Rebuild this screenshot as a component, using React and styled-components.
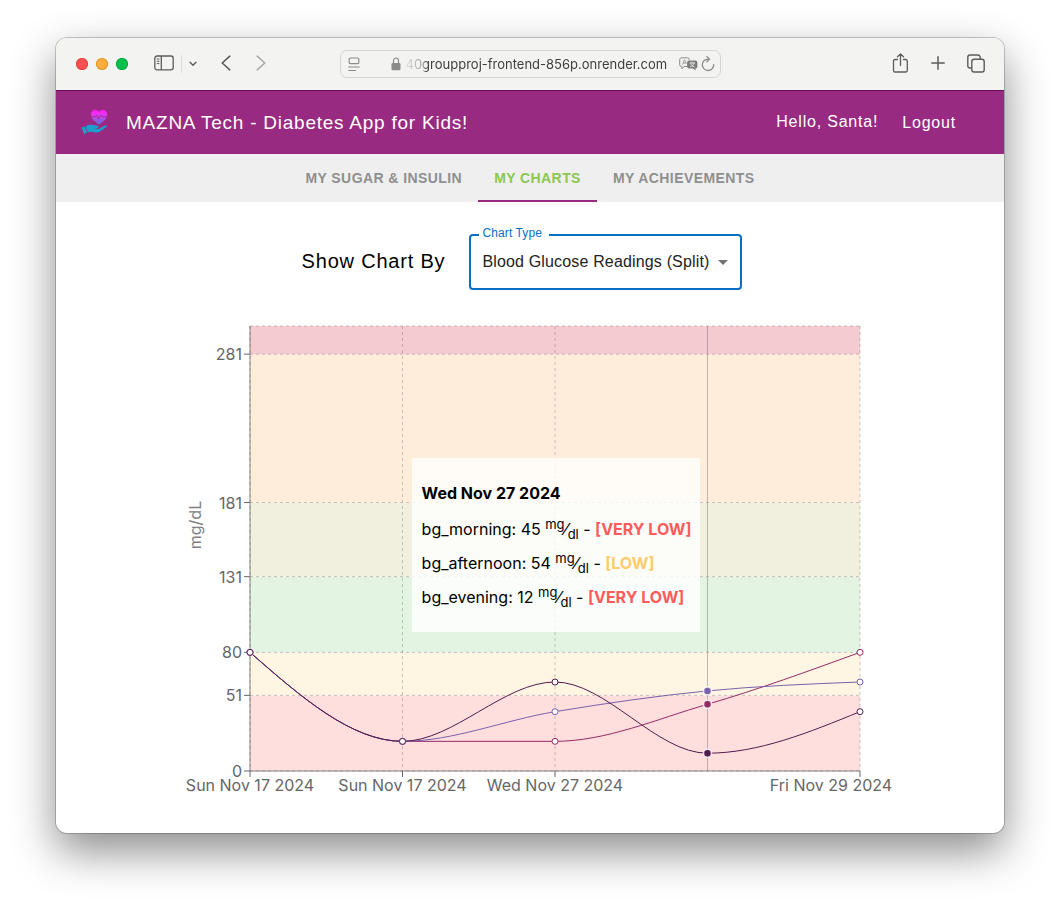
import React from "react";
import styled, { createGlobalStyle } from "styled-components";

const HELV = `"Liberation Sans", Helvetica, Arial, sans-serif`;
const SYSTEM = `Inter, "Noto Sans", sans-serif`;

const GlobalStyle = createGlobalStyle`
  *, *::before, *::after { box-sizing: border-box; }
  body { margin: 0; background: #fff; font-family: ${HELV}; }
  button, input, select { font: inherit; color: inherit; border: 0; background: none; padding: 0; margin: 0; }
  button { cursor: pointer; }
  svg { display: block; }
`;

const Desktop = styled.div`
  padding: 38px 56px 74px;
`;

const BrowserWindow = styled.div`
  border-radius: 11px;
  overflow: hidden;
  background: #fff;
  box-shadow: 0 0 0 1px rgba(0, 0, 0, 0.2), 0 18px 44px rgba(0, 0, 0, 0.46);
`;

const Toolbar = styled.div`
  display: grid;
  grid-template-columns: 1fr minmax(0, 381px) 1fr;
  align-items: center;
  height: 52px;
  background: #f3f3f1;
  color: #5c5c5b;
`;

const ToolGroup = styled.div`
  display: flex;
  align-items: center;
  justify-content: ${(p) => (p.$end ? "flex-end" : "flex-start")};
  gap: ${(p) => p.$gap}px;
  padding: 0 ${(p) => (p.$end ? 18 : 0)}px 0 ${(p) => (p.$end ? 0 : 20)}px;
`;

const Lights = styled.div`
  display: flex;
  gap: 8px;
  margin-right: 26px;
`;

const Light = styled.button`
  width: 12px;
  height: 12px;
  border-radius: 50%;
  background: ${(p) => p.$color};
  box-shadow: inset 0 0 0 1px ${(p) => p.$ring};
`;

const IconButton = styled.button`
  display: flex;
  align-items: center;
  justify-content: center;
  width: ${(p) => p.$w || 20}px;
  height: 24px;
  padding-bottom: ${(p) => (p.$w ? 0 : 2)}px;
  color: ${(p) => (p.$muted ? "#aaaaa9" : "inherit")};
`;

const Divider = styled.span`
  width: 1px;
  height: 18px;
  margin: 0 4px 0 7px;
  background: #dededc;
`;

const NavButtons = styled.div`
  display: flex;
  gap: 15px;
  margin-left: 16px;
`;

const AddressBar = styled.div`
  display: flex;
  align-items: center;
  height: 28px;
  padding: 0 3px 0 7px;
  border: 1px solid #d5d5d3;
  border-radius: 7px;
  color: #8b8b8a;
`;

const LockSlot = styled.span`
  margin: 0 5px 0 30px;
`;

const Address = styled.input`
  flex: 1;
  min-width: 0;
  height: 24px;
  font-family: ${SYSTEM};
  font-size: 13px;
  color: #3f3f3e;
  outline: none;
  mask-image: linear-gradient(to right, rgba(0, 0, 0, 0.1), rgba(0, 0, 0, 0.5) 18px, #000 20px);
`;

const AppHeader = styled.header`
  display: flex;
  align-items: center;
  height: 64px;
  padding: 0 48px 0 24px;
  border-top: 1px solid #6b0a5c;
  background: #992a82;
  color: #fff;
`;

const Brand = styled.h1`
  flex: 1;
  margin: 0 0 0 18px;
  font-size: 19px;
  font-weight: 400;
  line-height: 24px;
  letter-spacing: 0.04em;
`;

const Greeting = styled.span`
  margin-right: 24px;
  padding-bottom: 2px;
  font-size: 16px;
  line-height: 24px;
  letter-spacing: 0.05em;
`;

const LogoutLink = styled.a`
  font-size: 16px;
  line-height: 24px;
  letter-spacing: 0.05em;
  color: inherit;
  text-decoration: none;
`;

const TabBar = styled.nav`
  display: flex;
  justify-content: center;
  height: 48px;
  background: #efefef;
`;

const Tab = styled.button`
  height: 48px;
  padding: 2px 16px 0;
  border-bottom: 2px solid ${(p) => (p.$active ? "#992a82" : "transparent")};
  font-size: 14px;
  font-weight: 700;
  letter-spacing: 0.03em;
  text-transform: uppercase;
  color: ${(p) => (p.$active ? "#8cc751" : "#8f8f8f")};
`;

const Main = styled.main`
  padding: 32px 24px 27px;
`;

const Controls = styled.div`
  display: flex;
  align-items: center;
  justify-content: center;
  gap: 24px;
  padding-right: 16px;
`;

const ControlsTitle = styled.h2`
  margin: 0;
  padding-bottom: 2px;
  font-size: 20px;
  font-weight: 400;
  line-height: 24px;
  letter-spacing: 0.04em;
  color: #000;
`;

const SelectField = styled.div`
  position: relative;
  display: flex;
  align-items: center;
  width: 273px;
  height: 56px;
  border: 2px solid #0a6fc4;
  border-radius: 4px;
`;

const SelectLabel = styled.label`
  position: absolute;
  top: -13px;
  left: 8px;
  padding: 0 7px 0 3px;
  background: #fff;
  font-size: 12px;
  line-height: 20px;
  letter-spacing: 0.01em;
  color: #0a6fc4;
`;

const Select = styled.select`
  flex: 1;
  height: 52px;
  padding: 0 28px 2px 11px;
  appearance: none;
  outline: none;
  font-size: 16px;
  letter-spacing: 0.01em;
  color: #222;
`;

const SelectArrow = styled.svg`
  position: absolute;
  top: 50%;
  right: 12px;
  margin-top: -2px;
  pointer-events: none;
`;

const ChartFrame = styled.div`
  position: relative;
  max-width: 740px;
  margin: 16px auto 0;
`;

const ChartSvg = styled.svg`
  width: 100%;
  height: auto;
  font-family: ${SYSTEM};
  font-size: 16px;
  fill: #666;
`;

const Tooltip = styled.div`
  position: absolute;
  top: 152px;
  left: 34%;
  padding: 18px 8px 18px 10px;
  background: rgba(255, 255, 255, 0.8);
  font-family: ${SYSTEM};
  font-size: 16px;
  line-height: 34px;
  white-space: nowrap;
  color: #000;

  p { margin: 0; height: 34px; }
  p:first-child { height: 36px; }
  sup, sub { font-size: 13px; line-height: 0; }
`;

const Level = styled.strong`
  color: ${(p) => p.$color};
`;

const X0 = 90;
const X1 = 700;
const Y0 = 20;
const Y1 = 465;
const MAX = 300;
const STEP = (X1 - X0) / 4;
const yOf = (v) => Y1 - (v * (Y1 - Y0)) / MAX;
const xOf = (i) => X0 + i * STEP;

const BANDS = [
  { from: 0, to: 51, color: "#ffdfde" },
  { from: 51, to: 80, color: "#fef5e2" },
  { from: 80, to: 131, color: "#e3f4e3" },
  { from: 131, to: 181, color: "#f1f0df" },
  { from: 181, to: 281, color: "#ffeddc" },
  { from: 281, to: 300, color: "#f3cbd1" },
];

const SERIES = [
  { key: "bg_morning", values: [80, 20, 20, 45, 80], color: "#942b65" },
  { key: "bg_afternoon", values: [80, 20, 40, 54, 60], color: "#7a62ad" },
  { key: "bg_evening", values: [80, 20, 60, 12, 40], color: "#521b4c" },
];

const DAYS = [
  { i: 0, text: "Sun Nov 17 2024" },
  { i: 1, text: "Sun Nov 17 2024" },
  { i: 2, text: "Wed Nov 27 2024" },
  { i: 4, text: "Fri Nov 29 2024", shift: -29 },
];

const ACTIVE = 3;

// Monotone cubic interpolation through evenly spaced points.
function monotonePath(values) {
  const ys = values.map(yOf);
  const n = ys.length;
  const d = ys.slice(1).map((y, i) => (y - ys[i]) / STEP);
  const m = ys.map((_, i) => {
    if (i === 0 || i === n - 1) return 0;
    const a = d[i - 1];
    const b = d[i];
    return (
      (Math.sign(a) + Math.sign(b)) *
      Math.min(Math.abs(a), Math.abs(b), 0.5 * Math.abs((a + b) / 2))
    );
  });
  m[0] = (3 * d[0] - m[1]) / 2;
  m[n - 1] = (3 * d[n - 2] - m[n - 2]) / 2;
  const h = STEP / 3;
  let path = `M${xOf(0)},${ys[0]}`;
  for (let i = 1; i < n; i += 1) {
    path += `C${xOf(i - 1) + h},${ys[i - 1] + m[i - 1] * h},${xOf(i) - h},${ys[i] - m[i] * h},${xOf(i)},${ys[i]}`;
  }
  return path;
}

function GlucoseChart() {
  return (
    <ChartSvg viewBox="0 0 740 500" role="img" aria-label="Blood glucose readings">
      {BANDS.map((b) => (
        <rect key={b.from} x={X0} width={X1 - X0} y={yOf(b.to)} height={yOf(b.from) - yOf(b.to)} fill={b.color} />
      ))}
      <g stroke="#666" fill="none">
        <path d={`M${X0},${Y0}V${Y1}H${X1}`} strokeOpacity="0.8" />
        {[0, 51, 80, 131, 181, 281].map((v) => (
          <path key={v} d={`M${X0 - 6},${yOf(v)}H${X0}`} />
        ))}
        {DAYS.map((d) => (
          <path key={d.i} d={`M${xOf(d.i)},${Y1}v6`} />
        ))}
      </g>
      <g stroke="#6e5a5a" strokeOpacity="0.34" strokeDasharray="3 3" fill="none">
        {[0, 51, 80, 131, 181, 281, 300].map((v) => (
          <path key={v} d={`M${X0},${yOf(v)}H${X1}`} />
        ))}
        {DAYS.map((d) => (
          <path key={d.i} d={`M${xOf(d.i)},${Y0}V${Y1}`} />
        ))}
      </g>
      {[0, 51, 80, 131, 181, 281].map((v) => (
        <text key={v} x={X0 - 8} y={yOf(v) + 6} textAnchor="end">{v}</text>
      ))}
      {DAYS.map((d) => (
        <text key={d.i} x={xOf(d.i) + (d.shift || 0)} y={Y1 + 20} textAnchor="middle">{d.text}</text>
      ))}
      <text transform="translate(41 219) rotate(-90)" textAnchor="middle" fill="#808080">mg/dL</text>
      <path d={`M${xOf(ACTIVE)},${Y0}V${Y1}`} stroke="#776b6b" strokeOpacity="0.45" />
      {SERIES.map((s) => (
        <path key={s.key} d={monotonePath(s.values)} fill="none" stroke={s.color} />
      ))}
      {SERIES.map((s) =>
        s.values.map((v, i) =>
          i === ACTIVE ? (
            <circle key={s.key + i} cx={xOf(i)} cy={yOf(v)} r="4" fill={s.color} stroke="#fff" strokeOpacity="0.8" strokeWidth="1.6" />
          ) : (
            <circle key={s.key + i} cx={xOf(i)} cy={yOf(v)} r="3" fill="#fff" stroke={s.color} />
          )
        )
      )}
    </ChartSvg>
  );
}

function Reading({ name, value, level, color }) {
  return (
    <p>
      {name}: {value} <sup>mg</sup>⁄<sub>dl</sub> - <Level $color={color}>[{level}]</Level>
    </p>
  );
}

function Logo() {
  return (
    <svg width="28" height="28" viewBox="0 0 28 28" aria-hidden="true">
      <defs>
        <linearGradient id="logoFill" x1="0" y1="0" x2="0" y2="28" gradientUnits="userSpaceOnUse">
          <stop offset="0.05" stopColor="#ff1cf5" />
          <stop offset="0.2" stopColor="#e535ee" />
          <stop offset="0.5" stopColor="#6a6cdc" />
          <stop offset="0.62" stopColor="#1b9fce" />
          <stop offset="1" stopColor="#0fa8c8" />
        </linearGradient>
      </defs>
      <g fill="url(#logoFill)">
        <path d="M19 15.400C13 11.500 11 9 11 5.600C11 2.800 12.900 0.800 15.200 0.800C16.900 0.800 18.200 1.700 19 3.100C19.800 1.700 21.200 0.800 22.900 0.800C25.200 0.800 27.200 2.800 27.200 5.600C27.200 9 25 11.500 19 15.400Z" />
        <path d="M1.600 18.600L4.600 17.400L7 23.600L4 25.200Z" />
        <path d="M5.600 17.600C8 15.300 11 14.900 13.500 15.900C15.200 16.600 17 16.200 18.200 16.900C19.200 17.600 18.400 18.900 17.200 19L13.500 19.300L18.500 19.900L25.200 16.400C26.600 15.800 27.500 17.100 26.300 18L19.500 22.800C18 23.700 16 23.600 14 23.200C11.500 22.700 10 22.600 7.800 23.200Z" />
      </g>
      <path d="M11 7.700H15.400L16.800 6.200L18.500 10.200L20.600 6.300L21.800 7.700H27.200" fill="none" stroke="#992a82" strokeWidth="0.8" />
    </svg>
  );
}

export default function App() {
  return (
    <>
      <GlobalStyle />
      <Desktop>
        <BrowserWindow>
          <Toolbar>
            <ToolGroup $gap={0}>
              <Lights>
                <Light aria-label="Close" $color="#ff5150" $ring="#e2403f" />
                <Light aria-label="Minimise" $color="#ffae3d" $ring="#e0962c" />
                <Light aria-label="Zoom" $color="#03c14b" $ring="#05a83f" />
              </Lights>
              <IconButton aria-label="Sidebar">
                <svg width="20" height="16" viewBox="0 0 20 16" fill="none" stroke="currentColor" strokeWidth="1.3">
                  <rect x="0.8" y="1" width="18.400" height="13.800" rx="2.200" />
                  <path d="M7.300 1V14.800" />
                  <path d="M2.800 4H5.400M2.800 6.300H5.400M2.800 8.600H5.400" strokeWidth="1" />
                </svg>
              </IconButton>
              <Divider />
              <IconButton $w={14} aria-label="Tab groups">
                <svg width="8" height="6" viewBox="0 0 8 6" fill="none" stroke="currentColor" strokeWidth="1.4" strokeLinecap="round" strokeLinejoin="round">
                  <path d="M1 1.300L4 4.300L7 1.300" />
                </svg>
              </IconButton>
              <NavButtons>
                <IconButton aria-label="Back">
                  <svg width="10" height="16" viewBox="0 0 10 16" fill="none" stroke="currentColor" strokeWidth="1.6" strokeLinecap="round" strokeLinejoin="round">
                    <path d="M8.800 1.200L1.200 8L8.800 14.800" />
                  </svg>
                </IconButton>
                <IconButton $muted aria-label="Forward">
                  <svg width="10" height="16" viewBox="0 0 10 16" fill="none" stroke="currentColor" strokeWidth="1.6" strokeLinecap="round" strokeLinejoin="round">
                    <path d="M1.200 1.200L8.800 8L1.200 14.800" />
                  </svg>
                </IconButton>
              </NavButtons>
            </ToolGroup>
            <AddressBar>
              <IconButton $w={13} aria-label="Reader">
                <svg width="12" height="15" viewBox="0 0 12 15" fill="none" stroke="currentColor" strokeWidth="1.2" strokeLinecap="round">
                  <rect x="1.200" y="1" width="9.600" height="5.600" rx="1.200" />
                  <path d="M0.700 10H11.300M0.700 13.500H7.500" />
                </svg>
              </IconButton>
              <LockSlot>
                <svg width="10" height="14" viewBox="0 0 10 14">
                  <rect x="0.500" y="6" width="9" height="7.200" rx="1.300" fill="currentColor" />
                  <path d="M2.500 6.500V3.700A2.500 2.700 0 0 1 7.500 3.700V6.500" fill="none" stroke="currentColor" strokeWidth="1.200" />
                </svg>
              </LockSlot>
              <Address aria-label="Address" readOnly value="40groupproj-frontend-856p.onrender.com" />
              <IconButton $w={21} aria-label="Translate">
                <svg width="19" height="14" viewBox="0 0 19 14">
                  <path d="M8 9.500H5L3 11.800V9.500H2.500A1.800 1.800 0 0 1 0.700 7.700V2.600A1.800 1.800 0 0 1 2.500 0.800H8.500A1.800 1.800 0 0 1 10.300 2.600V3" fill="none" stroke="currentColor" />
                  <path d="M3.300 7.800L5.500 2.700L7.300 6.800M4.200 6H6.800" fill="none" stroke="currentColor" strokeWidth="0.800" />
                  <path d="M10 3.600H16.500A1.900 1.900 0 0 1 18.400 5.500V9.600A1.900 1.900 0 0 1 16.500 11.500V13.600L14 11.500H10A1.900 1.900 0 0 1 8.100 9.600V5.500A1.900 1.900 0 0 1 10 3.600Z" fill="#7c7c7b" />
                  <path d="M10.500 6H16M13.200 4.800V6M11.200 9.900C13.500 9 14.700 7.800 15 6M11.600 6.500C12.200 8.200 13.500 9.200 15.500 9.900" fill="none" stroke="#f3f3f1" strokeWidth="0.900" />
                </svg>
              </IconButton>
              <IconButton $w={18} aria-label="Reload">
                <svg width="14" height="16" viewBox="0 0 14 16" fill="none" stroke="currentColor" strokeWidth="1.300" strokeLinecap="round" strokeLinejoin="round">
                  <path d="M12.700 8.600A5.700 5.700 0 1 1 7 3.100H8.300M6 0.700L8.500 3.100L6 5.700" />
                </svg>
              </IconButton>
            </AddressBar>
            <ToolGroup $end $gap={18}>
              <IconButton aria-label="Share">
                <svg width="16" height="20" viewBox="0 0 16 20" fill="none" stroke="currentColor" strokeWidth="1.300" strokeLinecap="round" strokeLinejoin="round">
                  <path d="M5.500 6.500H3.100A1.600 1.600 0 0 0 1.500 8.100V17.400A1.600 1.600 0 0 0 3.100 19H13.900A1.600 1.600 0 0 0 15.300 17.400V8.100A1.600 1.600 0 0 0 13.900 6.500H11.500M8.500 12.500V1M5.500 3.800L8.500 0.900L11.500 3.800" />
                </svg>
              </IconButton>
              <IconButton aria-label="New tab">
                <svg width="14" height="14" viewBox="0 0 14 14" fill="none" stroke="currentColor" strokeWidth="1.500" strokeLinecap="round">
                  <path d="M7 0.800V13.200M0.800 7H13.200" />
                </svg>
              </IconButton>
              <IconButton aria-label="Tab overview">
                <svg width="18" height="19" viewBox="0 0 18 19" fill="none" stroke="currentColor" strokeWidth="1.400">
                  <rect x="4.800" y="5.300" width="12.400" height="12.700" rx="2.300" />
                  <path d="M4.800 14H3A2.200 2.200 0 0 1 0.800 11.800V3.200A2.200 2.200 0 0 1 3 1H11A2.200 2.200 0 0 1 13.200 3.200V5.300" />
                </svg>
              </IconButton>
            </ToolGroup>
          </Toolbar>

          <AppHeader>
            <Logo />
            <Brand>MAZNA Tech - Diabetes App for Kids!</Brand>
            <Greeting>Hello, Santa!</Greeting>
            <LogoutLink href="#logout">Logout</LogoutLink>
          </AppHeader>

          <TabBar>
            <Tab>My Sugar &amp; Insulin</Tab>
            <Tab $active aria-current="page">My Charts</Tab>
            <Tab>My Achievements</Tab>
          </TabBar>

          <Main>
            <Controls>
              <ControlsTitle>Show Chart By</ControlsTitle>
              <SelectField>
                <SelectLabel htmlFor="chart-type">Chart Type</SelectLabel>
                <Select id="chart-type" defaultValue="split">
                  <option value="split">Blood Glucose Readings (Split)</option>
                </Select>
                <SelectArrow width="10" height="5" viewBox="0 0 10 5">
                  <path d="M0 0H10L5 5Z" fill="#757575" />
                </SelectArrow>
              </SelectField>
            </Controls>

            <ChartFrame>
              <GlucoseChart />
              <Tooltip role="tooltip">
                <p><strong>Wed Nov 27 2024</strong></p>
                <Reading name="bg_morning" value={45} level="VERY LOW" color="#ff5b5b" />
                <Reading name="bg_afternoon" value={54} level="LOW" color="#fccb6b" />
                <Reading name="bg_evening" value={12} level="VERY LOW" color="#ff5b5b" />
              </Tooltip>
            </ChartFrame>
          </Main>
        </BrowserWindow>
      </Desktop>
    </>
  );
}
